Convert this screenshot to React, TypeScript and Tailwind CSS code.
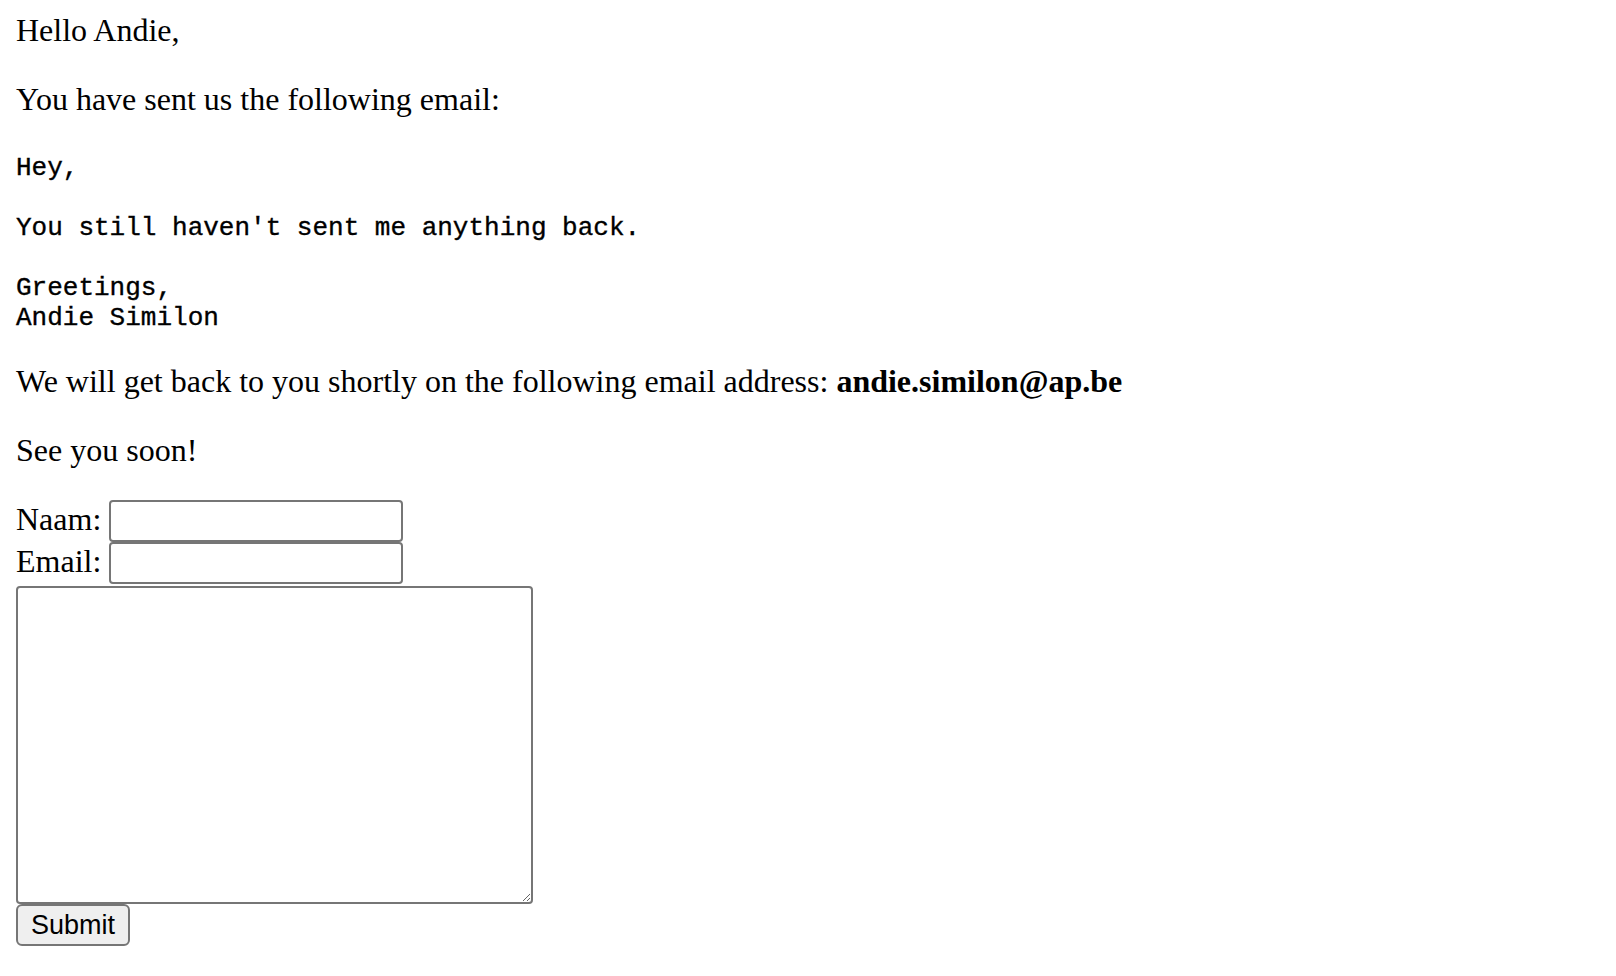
export default function App() {
  return (
    <div className="min-h-screen bg-white px-4 pt-[12px] text-black font-['Liberation_Serif',serif] text-[32px] leading-[37px]">
      <p>Hello Andie,</p>

      <p className="mt-8">You have sent us the following email:</p>

      <pre className="mt-8 pt-[3px] font-['Liberation_Mono',monospace] text-[26px] leading-[30px] whitespace-pre [-webkit-text-stroke:0.35px_black]">
        {"Hey,\n\nYou still haven't sent me anything back.\n\nGreetings,\nAndie Similon"}
      </pre>

      <p className="mt-[30px]">
        We will get back to you shortly on the following email address:{" "}
        <strong className="font-bold">andie.similon@ap.be</strong>
      </p>

      <p className="mt-8">See you soon!</p>

      <form
        className="mt-[31px] flex flex-col items-start"
        onSubmit={(e) => e.preventDefault()}
      >
        <label className="flex h-[42px] items-start gap-2">
          <span className="mt-[1px]">Naam:</span>
          <input
            type="text"
            className="h-[42px] w-[294px] shrink-0 rounded-[4px] border-2 border-[#767676] bg-white px-1 text-[26px] outline-none"
          />
        </label>
        <label className="flex h-[42px] items-start gap-2">
          <span className="mt-[1px]">Email:</span>
          <input
            type="email"
            className="h-[42px] w-[294px] shrink-0 rounded-[4px] border-2 border-[#767676] bg-white px-1 text-[26px] outline-none"
          />
        </label>
        <textarea className="mt-[2px] h-[318px] w-[517px] rounded-[4px] border-2 border-[#767676] bg-white p-1 font-['Liberation_Mono',monospace] text-[26px] outline-none" />
        <button
          type="submit"
          className="mt-0 h-[42px] w-[114px] rounded-[6px] border-2 border-[#767676] bg-[#efefef] font-['Liberation_Sans',Arial,sans-serif] text-[27px] leading-none"
        >
          Submit
        </button>
      </form>
    </div>
  );
}
